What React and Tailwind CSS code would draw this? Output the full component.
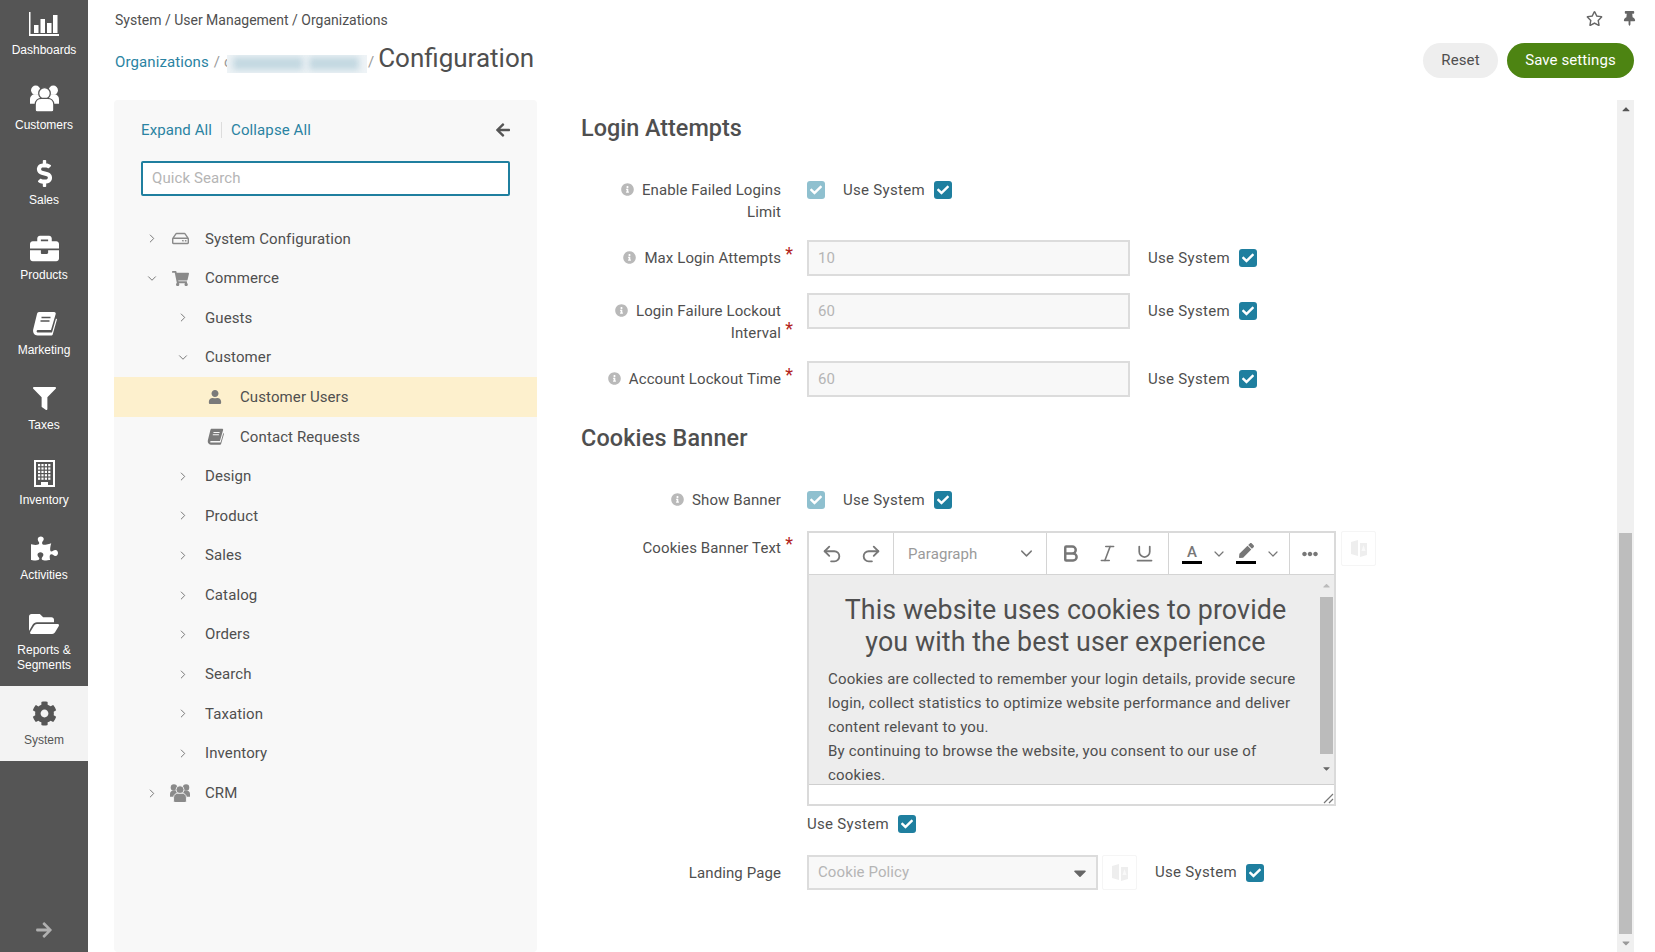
import { Undo2, Redo2, Bold, Italic, Underline, ChevronDown, ChevronRight } from 'lucide-react'
import {
  FaDollarSign, FaBriefcase, FaFilter, FaPuzzlePiece,
  FaFolderOpen, FaCog, FaArrowRight, FaArrowLeft, FaRegStar, FaThumbtack, FaRegHdd, FaShoppingCart,
  FaUser, FaInfoCircle, FaCheck, FaCaretDown, FaCaretUp, FaEllipsisH, FaPen,
} from 'react-icons/fa'

function BarsIcon() {
  return (
    <svg width="30" height="24" viewBox="0 0 30 24" fill="currentColor">
      <path d="M0 0h1.5v22H30v2H0z" />
      <rect x="5" y="13" width="4.5" height="8" />
      <rect x="11.5" y="7" width="4.5" height="14" />
      <rect x="18" y="11" width="4.5" height="10" />
      <rect x="24" y="3" width="4.5" height="18" />
    </svg>
  )
}

function UsersIcon({ size = 29, line = '#555555' }) {
  return (
    <svg width={size} height={size * 0.93} viewBox="0 0 28 26" fill="currentColor">
      <circle cx="5.5" cy="5" r="4.5" />
      <circle cx="22.5" cy="5" r="4.5" />
      <path d="M0 18v-4c0-3 2-5 5-5h18c3 0 5 2 5 5v4z" />
      <g stroke={line} strokeWidth="1.2">
        <circle cx="14" cy="8" r="5.6" />
        <path d="M5 24v-5c0-4 3-6 6-6h6c3 0 6 2 6 6v5c0 1-1 2-2 2H7c-1 0-2-1-2-2z" />
      </g>
    </svg>
  )
}

function BookIcon({ size = 25, line = '#555555' }) {
  return (
    <svg width={size} height={size} viewBox="0 0 25 25" fill="currentColor">
      <path d="M7 1h15c1.500 0 2 1 1.700 2L19 19H6c-1.800 0-1.800 2.500 0 2.500h14l4-14 1 .8-4.300 15.200c-.2.700-.8 1-1.500 1H5.500C2.500 24.500.5 21.500 1.200 18.500L5 3c.3-1.200 1-2 2-2z" />
      <path d="M9.500 6.500h9M8.500 10h9" stroke={line} strokeWidth="1.600" />
    </svg>
  )
}

function BuildingIcon() {
  const dots = []
  for (let r = 0; r < 5; r++) {
    for (let c = 0; c < 4; c++) {
      dots.push(<rect key={`${r}-${c}`} x={4 + c * 3.4} y={4 + r * 3.4} width="2.200" height="2.200" fill="currentColor" />)
    }
  }
  return (
    <svg width="21" height="27" viewBox="0 0 21 27">
      <rect x="1" y="1" width="19" height="25" fill="none" stroke="currentColor" strokeWidth="2" />
      {dots}
      <path d="M7 26v-4h7v4z" fill="currentColor" />
    </svg>
  )
}

function TranslateIcon() {
  return (
    <svg width="18" height="20" viewBox="0 0 18 20" fill="#eeeeee">
      <path d="M1 3l7-2v16l-7-2zM10 4h7v12l-7 2z" />
      <path d="M13.500 6l-2 6h4z" fill="#f9f9f9" />
    </svg>
  )
}

const nav = [
  { label: 'Dashboards', icon: <BarsIcon /> },
  { label: 'Customers', icon: <UsersIcon /> },
  { label: 'Sales', icon: <FaDollarSign size={27} /> },
  { label: 'Products', icon: <FaBriefcase size={29} /> },
  { label: 'Marketing', icon: <BookIcon /> },
  { label: 'Taxes', icon: <FaFilter size={23} /> },
  { label: 'Inventory', icon: <BuildingIcon /> },
  { label: 'Activities', icon: <FaPuzzlePiece size={27} /> },
  { label: ['Reports &', 'Segments'], icon: <FaFolderOpen size={30} /> },
  { label: 'System', icon: <FaCog size={25} />, active: true },
]

const tree = [
  { label: 'System Configuration', level: 0, arrow: 'right', icon: <FaRegHdd size={17} /> },
  { label: 'Commerce', level: 0, arrow: 'down', icon: <FaShoppingCart size={17} /> },
  { label: 'Guests', level: 1, arrow: 'right' },
  { label: 'Customer', level: 1, arrow: 'down' },
  { label: 'Customer Users', level: 2, icon: <FaUser size={14} />, active: true },
  { label: 'Contact Requests', level: 2, icon: <BookIcon size={17} line="#f8f8f8" /> },
  { label: 'Design', level: 1, arrow: 'right' },
  { label: 'Product', level: 1, arrow: 'right' },
  { label: 'Sales', level: 1, arrow: 'right' },
  { label: 'Catalog', level: 1, arrow: 'right' },
  { label: 'Orders', level: 1, arrow: 'right' },
  { label: 'Search', level: 1, arrow: 'right' },
  { label: 'Taxation', level: 1, arrow: 'right' },
  { label: 'Inventory', level: 1, arrow: 'right' },
  { label: 'CRM', level: 0, arrow: 'right', icon: <UsersIcon size={20} line="#f8f8f8" /> },
]

function Check({ faded }) {
  return (
    <span className={`flex h-[18px] w-[18px] shrink-0 items-center justify-center rounded-[3px] text-white ${faded ? 'bg-[#8fc0cf]' : 'bg-[#1f7f9f]'}`}>
      <FaCheck size={12} />
    </span>
  )
}

function UseSystem() {
  return (
    <span className="flex items-center gap-[9px] whitespace-nowrap tracking-[0.3px]">
      Use System
      <Check />
    </span>
  )
}

function Label({ lines, info, required }) {
  return (
    <div className="relative w-[209px] shrink-0 text-right leading-[22px]">
      {lines.map((line, i) => (
        <div key={line}>
          {info && i === 0 && <FaInfoCircle size={13} className="mr-[8px] inline align-[-1px] text-[#b9b9b9]" />}
          {line}
        </div>
      ))}
      {required && <span className="absolute bottom-[6px] right-[-12px] text-[18px] leading-none text-[#b3261e]">*</span>}
    </div>
  )
}

function TextRow({ lines, value }) {
  return (
    <div className="mb-[17px] flex items-start">
      <div className="pt-[7px]"><Label lines={lines} info required /></div>
      <input readOnly value={value} className="ml-[26px] h-[36px] w-[323px] border-2 border-[#dcdcdc] bg-[#f8f8f8] px-[9px] text-[15px] text-[#b5b5b5] outline-none" />
      <div className="ml-[18px] flex h-[36px] items-center"><UseSystem /></div>
    </div>
  )
}

function CheckRow({ lines, mb }) {
  return (
    <div className={`flex items-start ${mb}`}>
      <Label lines={lines} info />
      <div className="ml-[26px] flex h-[22px] items-center">
        <Check faded />
        <span className="ml-[18px]"><UseSystem /></span>
      </div>
    </div>
  )
}

function TranslateBtn() {
  return (
    <span className="flex h-[35px] w-[35px] shrink-0 items-center justify-center rounded-[2px] border border-[#f5f5f5]">
      <TranslateIcon />
    </span>
  )
}

function Editor() {
  return (
    <div className="flex h-[275px] w-[529px] flex-col border-2 border-[#dadada]">
      <div className="flex h-[42px] shrink-0 items-center border-b border-[#d4d4d4] text-[#777]">
        <div className="flex h-full w-[85px] items-center gap-[17px] border-r border-[#d4d4d4] pl-[12px]">
          <Undo2 size={22} strokeWidth={2} />
          <Redo2 size={22} strokeWidth={2} />
        </div>
        <div className="flex h-full w-[153px] items-center justify-between border-r border-[#d4d4d4] pl-[14px] pr-[10px]">
          <span className="pt-[2px] text-[15px] text-[#9a9a9a]">Paragraph</span>
          <ChevronDown size={19} strokeWidth={1.8} />
        </div>
        <div className="flex h-full w-[122px] items-center gap-[16px] border-r border-[#d4d4d4] pl-[13px]">
          <Bold size={21} strokeWidth={2.8} />
          <Italic size={21} strokeWidth={1.8} />
          <Underline size={21} strokeWidth={2} />
        </div>
        <div className="flex h-full w-[121px] items-center border-r border-[#d4d4d4] pl-[13px]">
          <span className="flex w-[20px] flex-col items-center">
            <span className="text-[15px] font-medium leading-[17px]">A</span>
            <span className="h-[3px] w-[20px] bg-black" />
          </span>
          <ChevronDown size={16} strokeWidth={1.8} className="ml-[9px]" />
          <span className="ml-[9px] flex w-[20px] flex-col items-center">
            <FaPen size={15} className="mb-[3px]" />
            <span className="h-[3px] w-[20px] bg-black" />
          </span>
          <ChevronDown size={16} strokeWidth={1.8} className="ml-[9px]" />
        </div>
        <div className="flex flex-1 justify-center pr-[4px]"><FaEllipsisH size={16} /></div>
      </div>
      <div className="relative flex min-h-0 flex-1 overflow-hidden bg-[#ededed]">
        <div className="flex-1 overflow-hidden pl-[19px] pr-[16px] pt-[19px]">
          <div className="text-center text-[26.8px] leading-[32px]">
            This website uses cookies to provide
            <br />
            you with the best user experience
          </div>
          <div className="mt-[9px] text-[15px] leading-[24px] tracking-[0.2px]">
            Cookies are collected to remember your login details, provide secure login, collect statistics to optimize website performance and deliver content relevant to you.
            <br />
            By continuing to browse the website, you consent to our use of cookies.
          </div>
        </div>
        <div className="flex w-[15px] shrink-0 flex-col items-center justify-between text-[#666]">
          <FaCaretUp size={11} className="mt-[5px] text-[#bbb]" />
          <div className="mb-[3px] h-[157px] w-[13px] bg-[#bbb]" />
          <FaCaretDown size={11} className="mb-[10px]" />
        </div>
      </div>
      <div className="relative h-[20px] shrink-0 border-t border-[#cfcfcf] bg-white">
        <svg className="absolute bottom-0 right-0" width="11" height="11" viewBox="0 0 11 11" stroke="#777" strokeWidth="1.2">
          <path d="M1 10 10 1M6 10l4-4" />
        </svg>
      </div>
    </div>
  )
}

export default function App() {
  return (
    <div className="flex h-screen overflow-hidden bg-white font-['Roboto',sans-serif] text-[15px] tracking-[0.1px] text-[#4f4f4f]">
      <aside className="flex w-[88px] shrink-0 flex-col bg-[#555555] tracking-normal">
        <div className="-mt-[4px] flex flex-col">
          {nav.map((n) => {
            const lines = Array.isArray(n.label) ? n.label : [n.label]
            return (
              <div key={lines[0]} className={`flex flex-col items-center pt-[12px] font-['Liberation_Sans',sans-serif] text-[12px] leading-[15px] ${lines.length > 1 ? 'h-[90px]' : 'h-[75px]'} ${n.active ? 'bg-[#f3f3f3] text-[#555]' : 'text-white'}`}>
                <div className="flex h-[31px] items-center">{n.icon}</div>
                <div className="mt-[4px] text-center">
                  {lines.map((l) => <div key={l}>{l}</div>)}
                </div>
              </div>
            )
          })}
        </div>
        <div className="mt-auto flex justify-center pb-[13px] text-[#b0b0b0]"><FaArrowRight size={18} /></div>
      </aside>

      <main className="flex min-w-0 flex-1 flex-col pl-[26px] pr-[21px]">
        <header className="relative h-[100px] shrink-0">
          <div className="pl-[1px] pt-[12px] text-[14px] leading-[16px] tracking-normal">System / User Management / Organizations</div>
          <div className="mt-[13px] flex items-start justify-between">
            <div className="flex items-baseline pl-[1px] text-[15px] text-[#9a9a9a]">
              <span className="text-[#2a83a2]">Organizations</span>
              <span className="ml-[5px]">/ c</span>
              <span className="relative -ml-[5px] flex h-[18px] w-[140px] translate-y-[3px] items-center gap-[6px] overflow-hidden bg-[#eef3f6] pl-[6px]">
                <span className="h-[13px] w-[70px] bg-[#c3d8e1] blur-[3px]" />
                <span className="h-[13px] w-[50px] bg-[#c3d8e1] blur-[3px]" />
              </span>
              <span className="ml-[1px]">/</span>
              <span className="ml-[4px] text-[26px] leading-[34px] tracking-normal text-[#4f4f4f]">Configuration</span>
            </div>
            <div className="mt-[2px] flex gap-[9px]">
              <button className="h-[35px] w-[75px] rounded-full bg-[#eeeeee]">Reset</button>
              <button className="h-[35px] w-[127px] rounded-full bg-[#4d8412] text-white">Save settings</button>
            </div>
          </div>
          <div className="absolute right-0 top-[10px] flex items-center gap-[19px] text-[#666]">
            <FaRegStar size={17} />
            <FaThumbtack size={15} className="mr-[-3px]" />
          </div>
        </header>

        <div className="flex min-h-0 flex-1">
          <section className="w-[423px] shrink-0 rounded-[4px] bg-[#f8f8f8]">
            <div className="flex items-center justify-between pl-[27px] pr-[26px] pt-[20px] leading-[20px] text-[#2a83a2]">
              <div className="flex items-center">
                <span>Expand All</span>
                <span className="mx-[9px] h-[16px] w-px bg-[#dddddd]" />
                <span>Collapse All</span>
              </div>
              <FaArrowLeft size={16} className="text-[#555]" />
            </div>
            <div className="mx-[27px] mt-[21px] flex h-[35px] w-[369px] items-center rounded-[2px] border-2 border-[#1f7f9f] bg-white px-[9px] text-[#b5b5b5]">
              Quick Search
            </div>
            <div className="mt-[23px]">
              {tree.map((t) => (
                <div key={t.label} className={`relative flex h-[39.6px] items-center ${t.active ? 'bg-[#fdf0cd]' : ''}`}>
                  <span className={`flex w-[14px] shrink-0 justify-center text-[#777] ${t.level === 0 ? 'ml-[31px]' : 'ml-[62px]'}`}>
                    {t.arrow === 'right' && <ChevronRight size={17} strokeWidth={1.7} />}
                    {t.arrow === 'down' && <ChevronDown size={17} strokeWidth={1.7} />}
                  </span>
                  {t.level === 0 && (
                    <span className="ml-[11px] flex w-[20px] justify-center text-[#8a8a8a]">{t.icon}</span>
                  )}
                  {t.level === 2 && (
                    <span className="ml-[15px] flex w-[20px] justify-center text-[#7a7a7a]">{t.icon}</span>
                  )}
                  <span className="ml-[15px]">{t.label}</span>
                </div>
              ))}
            </div>
          </section>

          <section className="min-w-0 flex-1 overflow-hidden pl-[35px]">
            <h2 className="ml-[9px] mt-[13px] text-[23.400px] font-medium leading-[30px] tracking-normal">Login Attempts</h2>
            <div className="mt-[36px]">
              <CheckRow lines={['Enable Failed Logins', 'Limit']} mb="mb-[17px]" />
              <TextRow lines={['Max Login Attempts']} value="10" />
              <TextRow lines={['Login Failure Lockout', 'Interval']} value="60" />
              <TextRow lines={['Account Lockout Time']} value="60" />
            </div>
            <h2 className="ml-[9px] mt-[26px] text-[23.400px] font-medium leading-[30px] tracking-[0.15px]">Cookies Banner</h2>
            <div className="mt-[36px]">
              <CheckRow lines={['Show Banner']} mb="mb-[20px]" />
              <div className="flex items-start">
                <div className="pt-[6px]"><Label lines={['Cookies Banner Text']} required /></div>
                <div className="ml-[26px]"><Editor /></div>
                <div className="ml-[5px]"><TranslateBtn /></div>
              </div>
              <div className="ml-[235px] mt-[7px] h-[22px]"><UseSystem /></div>
              <div className="mt-[20px] flex items-center">
                <Label lines={['Landing Page']} />
                <div className="ml-[26px] flex h-[35px] w-[291px] items-center justify-between border-2 border-[#dcdcdc] bg-[#f8f8f8] pl-[9px] pr-[6px] text-[#b5b5b5]">
                  Cookie Policy
                  <FaCaretDown size={20} className="text-[#666]" />
                </div>
                <div className="ml-[4px]"><TranslateBtn /></div>
                <div className="ml-[18px]"><UseSystem /></div>
              </div>
            </div>
          </section>

          <div className="flex w-[17px] shrink-0 flex-col items-center justify-between bg-[#f0f0f0]">
            <FaCaretUp size={12} className="mt-[3px] text-[#555]" />
            <div className="mt-auto h-[401px] w-[13px] bg-[#bdbdbd]" />
            <FaCaretDown size={12} className="my-[3px] text-[#999]" />
          </div>
        </div>
      </main>
    </div>
  )
}
